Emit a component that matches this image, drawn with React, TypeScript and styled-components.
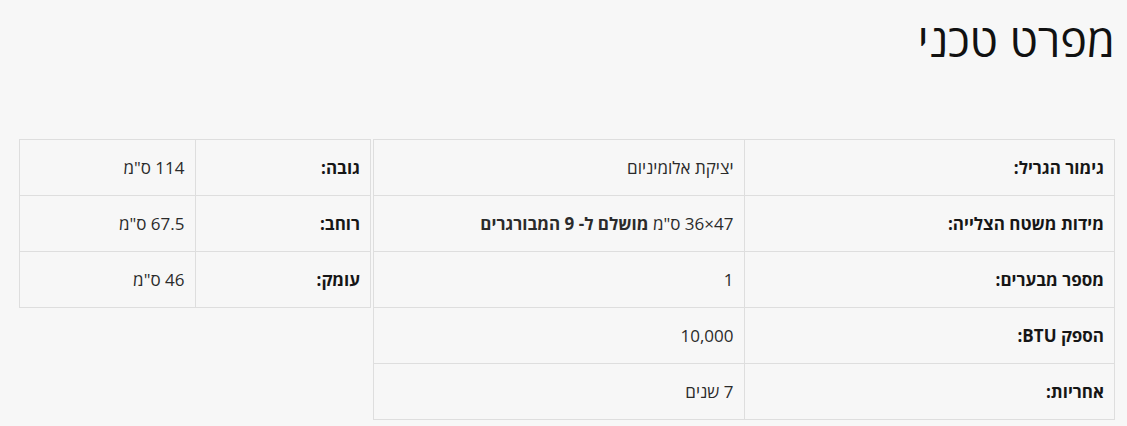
import React from "react";
import styled, { createGlobalStyle } from "styled-components";

const GlobalStyle = createGlobalStyle`
  body {
    margin: 0;
    background: #f7f7f7;
    font-family: "Open Sans", "Noto Sans", sans-serif;
    color: #222;
  }
`;

const Page = styled.div`
  direction: rtl;
  padding: 12px 12px 0 18px;
`;

const Title = styled.h2`
  margin: 0;
  font-size: 45px;
  font-weight: 400;
  line-height: 56px;
  color: #111;
`;

const Columns = styled.div`
  display: grid;
  grid-template-columns: 742px 352px;
  column-gap: 2px;
  align-items: start;
  margin-top: 71px;
`;

const SpecTable = styled.table`
  width: 100%;
  border-collapse: collapse;
  table-layout: fixed;
`;

const Row = styled.tr`
  height: 56px;
`;

const Cell = styled.td<{ $label?: boolean }>`
  border: 1px solid #dedede;
  padding: 0 10px;
  font-size: 17px;
  text-align: right;
  vertical-align: middle;
  font-weight: ${(p) => (p.$label ? 700 : 400)};
  color: ${(p) => (p.$label ? "#161616" : "#2b2b2b")};
`;

type Spec = { label: string; value: React.ReactNode };

const mainSpecs: Spec[] = [
  { label: "גימור הגריל:", value: "יציקת אלומיניום" },
  {
    label: "מידות משטח הצלייה:",
    value: (
      <>
        47×36 ס"מ <b>מושלם ל- 9 המבורגרים</b>
      </>
    ),
  },
  { label: "מספר מבערים:", value: "1" },
  { label: "הספק BTU:", value: "10,000" },
  { label: "אחריות:", value: "7 שנים" },
];

const sizeSpecs: Spec[] = [
  { label: "גובה:", value: '114 ס"מ' },
  { label: "רוחב:", value: '67.5 ס"מ' },
  { label: "עומק:", value: '46 ס"מ' },
];

const SpecsBlock: React.FunctionComponent<{ specs: Spec[] }> = ({ specs }) => (
  <SpecTable>
    <tbody>
      {specs.map((spec, idx) => (
        <Row key={idx}>
          <Cell $label>{spec.label}</Cell>
          <Cell>{spec.value}</Cell>
        </Row>
      ))}
    </tbody>
  </SpecTable>
);

const App: React.FunctionComponent = () => {
  return (
    <>
      <GlobalStyle />
      <Page>
        <Title>מפרט טכני</Title>
        <Columns>
          <SpecsBlock specs={mainSpecs} />
          <SpecsBlock specs={sizeSpecs} />
        </Columns>
      </Page>
    </>
  );
};

export default App;
